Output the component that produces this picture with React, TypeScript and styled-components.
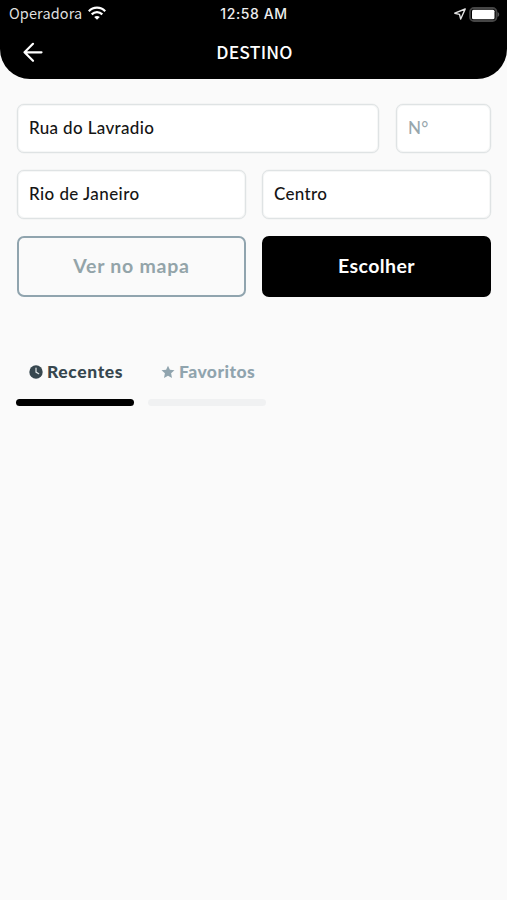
import React from "react";
import styled, { createGlobalStyle } from "styled-components";

const GlobalStyle = createGlobalStyle`
  *, *::before, *::after { box-sizing: border-box; }
  body { margin: 0; background: #fafafa; }
`;

const Screen = styled.main`
  width: 100%;
  min-height: 900px;
  background: #fafafa;
  font-family: Lato, "Open Sans", sans-serif;
`;

const Header = styled.header`
  height: 79px;
  background: #000;
  color: #fff;
  border-radius: 0 0 30px 30px;
`;

const StatusBar = styled.div`
  display: grid;
  grid-template-columns: 1fr auto 1fr;
  align-items: center;
  height: 27px;
  padding: 0 7px 0 9px;
  font: 400 14px/27px Inter, sans-serif;
`;

const Carrier = styled.div`
  display: flex;
  align-items: center;
  gap: 6px;
  height: 26px;
  margin-bottom: 2px;
  font-family: "Noto Sans CJK SC", sans-serif;
  font-size: 14.5px;
  line-height: 24px;
  letter-spacing: 0.1px;
  color: #dedede;
`;

const Clock = styled.time`
  padding-right: 1px;
  font-size: 14px;
  font-weight: 500;
  line-height: 26px;
  letter-spacing: 0.6px;
  color: #eee;
`;

const Indicators = styled.div`
  display: flex;
  align-items: center;
  justify-content: flex-end;
  gap: 2px;
`;

const NavBar = styled.div`
  display: grid;
  grid-template-columns: 1fr auto 1fr;
  align-items: center;
  height: 50px;
  padding: 0 20px 0 22px;
`;

const BackButton = styled.button`
  display: flex;
  width: 22px;
  height: 22px;
  padding: 0;
  border: 0;
  background: none;
  color: #fff;
`;

const Title = styled.h1`
  margin: 0 0 1px;
  font: 500 17.5px/25px "Noto Sans CJK SC", sans-serif;
  letter-spacing: 0.2px;
`;

const Form = styled.form`
  display: flex;
  flex-direction: column;
  gap: 17px;
  padding: 25px 16px 0 17px;
`;

const Row = styled.div<{ $columns: string; $gap: number }>`
  display: grid;
  grid-template-columns: ${(p) => p.$columns};
  gap: ${(p) => p.$gap}px;
`;

const Field = styled.input<{ $spacing?: number }>`
  width: 100%;
  min-width: 0;
  height: 49px;
  padding: 0 11px 2px;
  border: 1px solid #dfe3e4;
  border-radius: 7px;
  box-shadow: 0 0 0 0.5px #edefef, inset 0 0 0 1px #f6f7f7;
  background: #fff;
  color: #151515;
  font: 500 17px Lato, sans-serif;
  letter-spacing: ${(p) => p.$spacing ?? 0}px;
  outline: none;
  &::placeholder { color: #98a7ad; opacity: 1; }
`;

const Button = styled.button<{ $primary?: boolean }>`
  height: 61px;
  padding: 0 0 2px;
  border: 2px solid ${(p) => (p.$primary ? "#000" : "#90a4ae")};
  border-radius: 7px;
  background: ${(p) => (p.$primary ? "#000" : "transparent")};
  color: ${(p) => (p.$primary ? "#fff" : "#93a4a9")};
  font: 700 19.5px Lato, sans-serif;
  letter-spacing: ${(p) => (p.$primary ? 0.4 : 0.75)}px;
`;

const Tabs = styled.div`
  display: flex;
  gap: 14px;
  padding: 63px 16px 0;
`;

const Tab = styled.button<{ $active?: boolean }>`
  display: flex;
  flex-direction: column;
  width: 118px;
  padding: 0;
  border: 0;
  background: none;
  color: ${(p) => (p.$active ? "#37474f" : "#90a4ae")};
  font: 900 17.5px/24px Lato, sans-serif;
  &::after {
    content: "";
    width: 100%;
    height: 7px;
    margin-top: 15px;
    border-radius: 4px;
    background: ${(p) => (p.$active ? "#000" : "#f0f1f2")};
  }
`;

const TabLabel = styled.span<{ $spacing: number }>`
  display: flex;
  align-items: center;
  width: 100%;
  gap: 4px;
  padding-left: 13px;
  letter-spacing: ${(p) => p.$spacing}px;
  white-space: nowrap;
`;

const WifiIcon = () => (
  <svg width="18" height="14" viewBox="0 0 18 14" fill="none" stroke="#fff" strokeWidth="2.2">
    <path d="M.8 5.2C5.2.4 12.8.4 17.2 5.2M3.7 8.4c3-3 7.6-3 10.6 0" />
    <path d="M9 13.8 6.2 11c1.6-1.5 4-1.5 5.6 0z" fill="#fff" stroke="none" />
  </svg>
);

const LocationIcon = () => (
  <svg width="14" height="14" viewBox="0 0 14 14" fill="none" stroke="#e4e4e4" strokeWidth="1.4" strokeLinejoin="round">
    <path d="M12.2 2 1.8 6.2l4.7 1.2L7.7 12z" />
  </svg>
);

const BatteryIcon = () => (
  <svg width="31" height="15" viewBox="0 0 31 15">
    <rect x="1" y="1" width="26.5" height="13" rx="4" fill="#000" stroke="#454545" strokeWidth="1.8" />
    <rect x="3" y="2.8" width="22.5" height="9.4" rx="1.5" fill="#fff" />
    <path d="M28.5 5c2.3.9 2.3 4.1 0 5z" fill="#555" />
  </svg>
);

const BackIcon = () => (
  <svg width="22" height="22" viewBox="0 0 22 22" fill="none" stroke="currentColor" strokeWidth="2.2" strokeLinecap="round" strokeLinejoin="round">
    <path d="M11 2.8 2.5 11.3l8.5 8.5M2.5 11.3h17" />
  </svg>
);

const ClockIcon = () => (
  <svg width="14" height="14" viewBox="0 0 14 14">
    <circle cx="7" cy="7" r="6.7" fill="currentColor" />
    <path d="M7 3.1v4l2.7 1.6" fill="none" stroke="#dfe5e7" strokeWidth="1.2" strokeLinecap="round" />
  </svg>
);

const StarIcon = () => (
  <svg width="14" height="14" viewBox="0 0 14 14" fill="currentColor">
    <path d="m7 .7 1.9 4.1 4.6.5-3.4 3 .9 4.6L7 10.7l-4 2.2.9-4.6-3.4-3 4.6-.5z" />
  </svg>
);

export default function App() {
  return (
    <>
      <GlobalStyle />
      <Screen>
        <Header>
          <StatusBar>
            <Carrier>Operadora <WifiIcon /></Carrier>
            <Clock>12:58 AM</Clock>
            <Indicators><LocationIcon /><BatteryIcon /></Indicators>
          </StatusBar>
          <NavBar>
            <BackButton aria-label="Voltar"><BackIcon /></BackButton>
            <Title>DESTINO</Title>
          </NavBar>
        </Header>
        <Form>
          <Row $columns="362px 1fr" $gap={17}>
            <Field defaultValue="Rua do Lavradio" $spacing={0.35} />
            <Field placeholder="N°" $spacing={0.2} />
          </Row>
          <Row $columns="229px 1fr" $gap={16}>
            <Field defaultValue="Rio de Janeiro" $spacing={0.42} />
            <Field defaultValue="Centro" $spacing={0.35} />
          </Row>
          <Row $columns="229px 1fr" $gap={16}>
            <Button type="button">Ver no mapa</Button>
            <Button type="button" $primary>Escolher</Button>
          </Row>
        </Form>
        <Tabs>
          <Tab $active><TabLabel $spacing={0.6}><ClockIcon />Recentes</TabLabel></Tab>
          <Tab><TabLabel $spacing={0.45}><StarIcon />Favoritos</TabLabel></Tab>
        </Tabs>
      </Screen>
    </>
  );
}
